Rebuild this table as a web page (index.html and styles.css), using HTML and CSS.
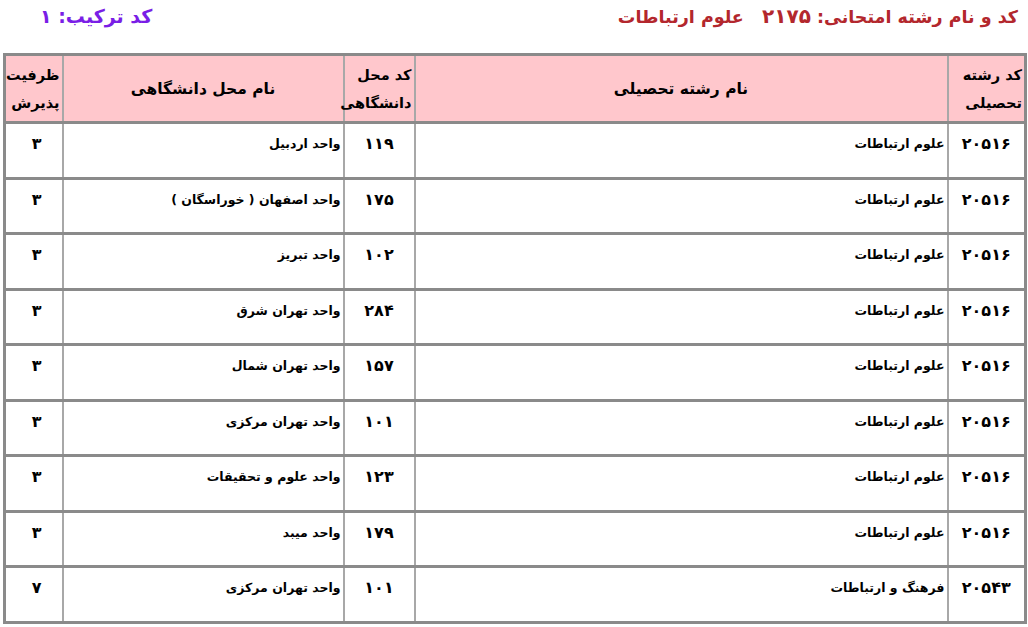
FILE: index.html
```html
<!DOCTYPE html>
<html lang="fa" dir="rtl">
<head>
<meta charset="utf-8">
<link rel="stylesheet" href="styles.css">
</head>
<body>
<div class="top">
  <div class="title">کد و نام رشته امتحانی<span class="colon">:</span> <span class="num">۲۱۷۵</span>&nbsp;&nbsp; علوم ارتباطات</div>
  <div class="combo">کد ترکیب<span class="colon">:</span> ۱</div>
</div>
<table class="grid">
  <colgroup>
    <col class="c-code">
    <col class="c-name">
    <col class="c-ucode">
    <col class="c-uname">
    <col class="c-cap">
  </colgroup>
  <thead>
    <tr>
      <th class="h-left">کد رشته<br>تحصیلی</th>
      <th>نام رشته تحصیلی</th>
      <th class="h-left">کد محل<br>دانشگاهی</th>
      <th>نام محل دانشگاهی</th>
      <th class="h-left">ظرفیت<br>پذیرش</th>
    </tr>
  </thead>
  <tbody>
    <tr><td class="code">۲۰۵۱۶</td><td class="name">علوم ارتباطات</td><td class="code">۱۱۹</td><td class="name">واحد اردبیل</td><td class="cap">۳</td></tr>
    <tr><td class="code">۲۰۵۱۶</td><td class="name">علوم ارتباطات</td><td class="code">۱۷۵</td><td class="name">واحد اصفهان ( خوراسگان )</td><td class="cap">۳</td></tr>
    <tr><td class="code">۲۰۵۱۶</td><td class="name">علوم ارتباطات</td><td class="code">۱۰۲</td><td class="name">واحد تبریز</td><td class="cap">۳</td></tr>
    <tr><td class="code">۲۰۵۱۶</td><td class="name">علوم ارتباطات</td><td class="code">۲۸۴</td><td class="name">واحد تهران شرق</td><td class="cap">۳</td></tr>
    <tr><td class="code">۲۰۵۱۶</td><td class="name">علوم ارتباطات</td><td class="code">۱۵۷</td><td class="name">واحد تهران شمال</td><td class="cap">۳</td></tr>
    <tr><td class="code">۲۰۵۱۶</td><td class="name">علوم ارتباطات</td><td class="code">۱۰۱</td><td class="name">واحد تهران مرکزی</td><td class="cap">۳</td></tr>
    <tr><td class="code">۲۰۵۱۶</td><td class="name">علوم ارتباطات</td><td class="code">۱۲۳</td><td class="name">واحد علوم و تحقیقات</td><td class="cap">۳</td></tr>
    <tr><td class="code">۲۰۵۱۶</td><td class="name">علوم ارتباطات</td><td class="code">۱۷۹</td><td class="name">واحد میبد</td><td class="cap">۳</td></tr>
    <tr><td class="code">۲۰۵۴۳</td><td class="name">فرهنگ و ارتباطات</td><td class="code">۱۰۱</td><td class="name">واحد تهران مرکزی</td><td class="cap">۷</td></tr>
  </tbody>
</table>
</body>
</html>
```
FILE: styles.css
```css
html, body {
  margin: 0;
  padding: 0;
  background: #ffffff;
}
body {
  font-family: "DejaVu Sans", sans-serif;
  color: #000;
  width: 1028px;
  overflow: hidden;
}
.top {
  display: flex;
  justify-content: space-between;
  align-items: center;
  height: 32px;
  padding: 0 10px 0 40px;
}
.title {
  font-weight: bold;
  font-size: 17.5px;
  color: #b3272d;
  white-space: nowrap;
}
.title .num {
  font-size: 20px;
}
.combo {
  font-weight: bold;
  font-size: 19px;
  color: #7a1ee6;
  white-space: nowrap;
}
.grid {
  margin: 21px 1px 0 3px;
  width: 1024px;
  border-collapse: collapse;
  table-layout: fixed;
  border: 3px solid #8a8a8a;
}
.c-code { width: 78px; }
.c-name { width: 533px; }
.c-ucode { width: 71px; }
.c-uname { width: 281px; }
.c-cap { width: 58px; }
thead tr {
  height: 68px;
}
thead th {
  background: #ffc7cc;
  font-size: 15.5px;
  font-weight: bold;
  line-height: 28px;
  text-align: center;
  border-left: 2px solid #a8a8a8;
  border-bottom: 3px solid #8a8a8a;
  padding: 0;
  vertical-align: middle;
}
thead th.h-left {
  text-align: right;
  padding-right: 2px;
  font-size: 14.5px;
}
tbody tr {
  height: 55.5px;
}
tbody td {
  border-left: 2px solid #a8a8a8;
  border-bottom: 3px solid #8a8a8a;
  vertical-align: top;
  padding: 10px 2px 0 2px;
  font-weight: bold;
  line-height: 20px;
}
td.code {
  text-align: center;
  font-size: 16px;
  padding-top: 10px;
}
td.name {
  text-align: right;
  font-size: 12.5px;
  padding-top: 10px;
}
td.cap {
  text-align: center;
  font-size: 16px;
  padding: 10px 0 0 6px;
}
```
